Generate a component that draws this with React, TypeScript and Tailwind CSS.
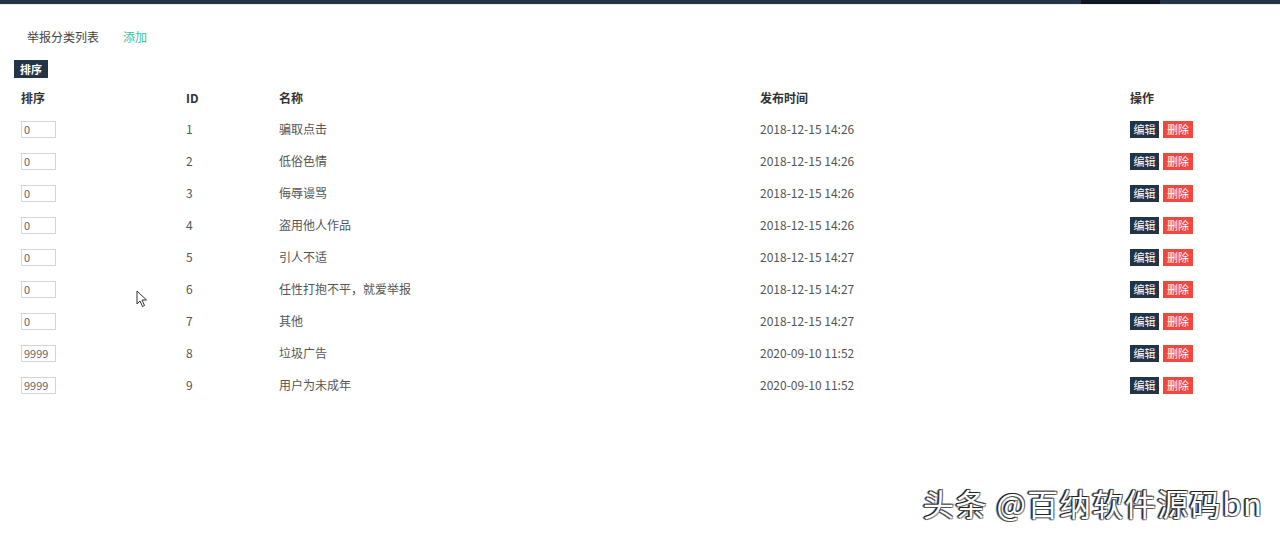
import React from 'react';

const rows = [
  { sort: '0', id: 1, name: '骗取点击', time: '2018-12-15 14:26' },
  { sort: '0', id: 2, name: '低俗色情', time: '2018-12-15 14:26' },
  { sort: '0', id: 3, name: '侮辱谩骂', time: '2018-12-15 14:26' },
  { sort: '0', id: 4, name: '盗用他人作品', time: '2018-12-15 14:26' },
  { sort: '0', id: 5, name: '引人不适', time: '2018-12-15 14:27' },
  { sort: '0', id: 6, name: '任性打抱不平，就爱举报', time: '2018-12-15 14:27' },
  { sort: '0', id: 7, name: '其他', time: '2018-12-15 14:27' },
  { sort: '9999', id: 8, name: '垃圾广告', time: '2020-09-10 11:52' },
  { sort: '9999', id: 9, name: '用户为未成年', time: '2020-09-10 11:52' },
];

const font = { fontFamily: '"Noto Sans CJK SC", "Open Sans", sans-serif' };

const App = () => {
  return (
    <div className="relative h-[539px] w-[1280px] overflow-hidden bg-white text-[12px] text-[#555]" style={font}>
      {/* top bar */}
      <div className="flex h-[4px] bg-[#253347]">
        <div className="w-[1081px]" />
        <div className="w-[79px] bg-[#0f1724]" />
      </div>
      <div className="h-px bg-[#e8ebef]" />

      <div className="px-[14px]">
        <div className="flex h-[55px] items-center gap-[24px] pl-[13px] pt-[8px]">
          <span className="text-[#444]">举报分类列表</span>
          <span className="text-[#3cc0a0]">添加</span>
        </div>

        <button className="flex h-[18px] items-center bg-[#253347] px-[6px] text-[11px] font-bold leading-none text-white">
          排序
        </button>

        <table className="mt-[4px] w-[1252px] border-collapse">
          <thead>
            <tr className="h-[31px] text-left text-[#333]">
              <th className="w-[164px] pl-[7px] font-bold">排序</th>
              <th className="w-[93px] pl-[8px] font-bold">ID</th>
              <th className="w-[481px] pl-[8px] font-bold">名称</th>
              <th className="w-[370px] pl-[8px] font-bold">发布时间</th>
              <th className="pl-[8px] font-bold">操作</th>
            </tr>
          </thead>
          <tbody>
            {rows.map((r) => (
              <tr key={r.id} className="h-[32px]">
                <td className="pl-[7px]">
                  <div className="flex h-[17px] w-[35px] items-center border border-[#d5d5d5] px-[2px] text-[11px] text-[#666]">
                    {r.sort}
                  </div>
                </td>
                <td className="pl-[8px]">{r.id}</td>
                <td className="pl-[8px]">{r.name}</td>
                <td className="pl-[8px] text-[#555]">{r.time}</td>
                <td className="pl-[8px]">
                  <div className="flex gap-[4px]">
                    <span className="flex h-[17px] w-[29px] items-center justify-center bg-[#253347] text-[11px] text-white">编辑</span>
                    <span className="flex h-[17px] w-[30px] items-center justify-center bg-[#f0483e] text-[11px] text-white">删除</span>
                  </div>
                </td>
              </tr>
            ))}
          </tbody>
        </table>
      </div>

      {/* mouse cursor */}
      <svg className="absolute left-[136px] top-[290px]" width="12" height="18" viewBox="0 0 12 18">
        <path d="M1 1 L1 14 L4 11 L6.5 16.5 L8.5 15.5 L6 10 L10.5 10 Z" fill="white" stroke="#333" strokeWidth="1" strokeLinejoin="round" />
      </svg>

      {/* watermark */}
      <div
        className="absolute left-[923px] top-[487px] text-[31px] leading-none tracking-[1.5px] text-white"
        style={{ textShadow: '-1px -1px 0 #222, 1px -1px 0 #555, -1px 1px 0 #555, 1px 1px 0 #999, -2px 0 1px #333' }}
      >
        头条 @百纳软件源码bn
      </div>
    </div>
  );
};

export default App;
